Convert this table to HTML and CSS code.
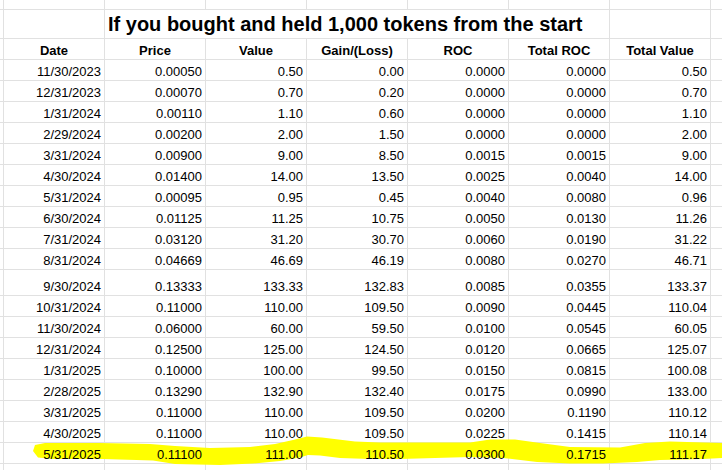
FILE: index.html
```html
<!DOCTYPE html>
<html lang="en">
<head>
<meta charset="utf-8">
<title>Token hold table</title>
<link rel="stylesheet" href="styles.css">
</head>
<body>
<main class="sheet">
  <div class="grid">
    <div class="row"><div class="c"></div><div class="c"></div><div class="c"></div><div class="c"></div><div class="c"></div><div class="c"></div><div class="c"></div><div class="c"></div><div class="c"></div></div>
    <div class="row title-row"><div class="c"></div><div class="c"></div><div class="c title"><span class="t">If you bought and held 1,000 tokens from the start</span></div><div class="c"></div><div class="c"></div></div>
    <div class="row head"><div class="c"></div><div class="c h"><span class="t">Date</span></div><div class="c h"><span class="t">Price</span></div><div class="c h"><span class="t">Value</span></div><div class="c h"><span class="t">Gain/(Loss)</span></div><div class="c h"><span class="t">ROC</span></div><div class="c h"><span class="t">Total ROC</span></div><div class="c h"><span class="t">Total Value</span></div><div class="c"></div></div>
    <div class="row"><div class="c"></div><div class="c n"><span class="t">11/30/2023</span></div><div class="c n"><span class="t">0.00050</span></div><div class="c n"><span class="t">0.50</span></div><div class="c n"><span class="t">0.00</span></div><div class="c n"><span class="t">0.0000</span></div><div class="c n"><span class="t">0.0000</span></div><div class="c n"><span class="t">0.50</span></div><div class="c"></div></div>
    <div class="row"><div class="c"></div><div class="c n"><span class="t">12/31/2023</span></div><div class="c n"><span class="t">0.00070</span></div><div class="c n"><span class="t">0.70</span></div><div class="c n"><span class="t">0.20</span></div><div class="c n"><span class="t">0.0000</span></div><div class="c n"><span class="t">0.0000</span></div><div class="c n"><span class="t">0.70</span></div><div class="c"></div></div>
    <div class="row"><div class="c"></div><div class="c n"><span class="t">1/31/2024</span></div><div class="c n"><span class="t">0.00110</span></div><div class="c n"><span class="t">1.10</span></div><div class="c n"><span class="t">0.60</span></div><div class="c n"><span class="t">0.0000</span></div><div class="c n"><span class="t">0.0000</span></div><div class="c n"><span class="t">1.10</span></div><div class="c"></div></div>
    <div class="row"><div class="c"></div><div class="c n"><span class="t">2/29/2024</span></div><div class="c n"><span class="t">0.00200</span></div><div class="c n"><span class="t">2.00</span></div><div class="c n"><span class="t">1.50</span></div><div class="c n"><span class="t">0.0000</span></div><div class="c n"><span class="t">0.0000</span></div><div class="c n"><span class="t">2.00</span></div><div class="c"></div></div>
    <div class="row"><div class="c"></div><div class="c n"><span class="t">3/31/2024</span></div><div class="c n"><span class="t">0.00900</span></div><div class="c n"><span class="t">9.00</span></div><div class="c n"><span class="t">8.50</span></div><div class="c n"><span class="t">0.0015</span></div><div class="c n"><span class="t">0.0015</span></div><div class="c n"><span class="t">9.00</span></div><div class="c"></div></div>
    <div class="row"><div class="c"></div><div class="c n"><span class="t">4/30/2024</span></div><div class="c n"><span class="t">0.01400</span></div><div class="c n"><span class="t">14.00</span></div><div class="c n"><span class="t">13.50</span></div><div class="c n"><span class="t">0.0025</span></div><div class="c n"><span class="t">0.0040</span></div><div class="c n"><span class="t">14.00</span></div><div class="c"></div></div>
    <div class="row"><div class="c"></div><div class="c n"><span class="t">5/31/2024</span></div><div class="c n"><span class="t">0.00095</span></div><div class="c n"><span class="t">0.95</span></div><div class="c n"><span class="t">0.45</span></div><div class="c n"><span class="t">0.0040</span></div><div class="c n"><span class="t">0.0080</span></div><div class="c n"><span class="t">0.96</span></div><div class="c"></div></div>
    <div class="row"><div class="c"></div><div class="c n"><span class="t">6/30/2024</span></div><div class="c n"><span class="t">0.01125</span></div><div class="c n"><span class="t">11.25</span></div><div class="c n"><span class="t">10.75</span></div><div class="c n"><span class="t">0.0050</span></div><div class="c n"><span class="t">0.0130</span></div><div class="c n"><span class="t">11.26</span></div><div class="c"></div></div>
    <div class="row"><div class="c"></div><div class="c n"><span class="t">7/31/2024</span></div><div class="c n"><span class="t">0.03120</span></div><div class="c n"><span class="t">31.20</span></div><div class="c n"><span class="t">30.70</span></div><div class="c n"><span class="t">0.0060</span></div><div class="c n"><span class="t">0.0190</span></div><div class="c n"><span class="t">31.22</span></div><div class="c"></div></div>
    <div class="row"><div class="c"></div><div class="c n"><span class="t">8/31/2024</span></div><div class="c n"><span class="t">0.04669</span></div><div class="c n"><span class="t">46.69</span></div><div class="c n"><span class="t">46.19</span></div><div class="c n"><span class="t">0.0080</span></div><div class="c n"><span class="t">0.0270</span></div><div class="c n"><span class="t">46.71</span></div><div class="c"></div></div>
    <div class="row"><div class="c"></div><div class="c n"><span class="t">9/30/2024</span></div><div class="c n"><span class="t">0.13333</span></div><div class="c n"><span class="t">133.33</span></div><div class="c n"><span class="t">132.83</span></div><div class="c n"><span class="t">0.0085</span></div><div class="c n"><span class="t">0.0355</span></div><div class="c n"><span class="t">133.37</span></div><div class="c"></div></div>
    <div class="row"><div class="c"></div><div class="c n"><span class="t">10/31/2024</span></div><div class="c n"><span class="t">0.11000</span></div><div class="c n"><span class="t">110.00</span></div><div class="c n"><span class="t">109.50</span></div><div class="c n"><span class="t">0.0090</span></div><div class="c n"><span class="t">0.0445</span></div><div class="c n"><span class="t">110.04</span></div><div class="c"></div></div>
    <div class="row"><div class="c"></div><div class="c n"><span class="t">11/30/2024</span></div><div class="c n"><span class="t">0.06000</span></div><div class="c n"><span class="t">60.00</span></div><div class="c n"><span class="t">59.50</span></div><div class="c n"><span class="t">0.0100</span></div><div class="c n"><span class="t">0.0545</span></div><div class="c n"><span class="t">60.05</span></div><div class="c"></div></div>
    <div class="row"><div class="c"></div><div class="c n"><span class="t">12/31/2024</span></div><div class="c n"><span class="t">0.12500</span></div><div class="c n"><span class="t">125.00</span></div><div class="c n"><span class="t">124.50</span></div><div class="c n"><span class="t">0.0120</span></div><div class="c n"><span class="t">0.0665</span></div><div class="c n"><span class="t">125.07</span></div><div class="c"></div></div>
    <div class="row"><div class="c"></div><div class="c n"><span class="t">1/31/2025</span></div><div class="c n"><span class="t">0.10000</span></div><div class="c n"><span class="t">100.00</span></div><div class="c n"><span class="t">99.50</span></div><div class="c n"><span class="t">0.0150</span></div><div class="c n"><span class="t">0.0815</span></div><div class="c n"><span class="t">100.08</span></div><div class="c"></div></div>
    <div class="row"><div class="c"></div><div class="c n"><span class="t">2/28/2025</span></div><div class="c n"><span class="t">0.13290</span></div><div class="c n"><span class="t">132.90</span></div><div class="c n"><span class="t">132.40</span></div><div class="c n"><span class="t">0.0175</span></div><div class="c n"><span class="t">0.0990</span></div><div class="c n"><span class="t">133.00</span></div><div class="c"></div></div>
    <div class="row"><div class="c"></div><div class="c n"><span class="t">3/31/2025</span></div><div class="c n"><span class="t">0.11000</span></div><div class="c n"><span class="t">110.00</span></div><div class="c n"><span class="t">109.50</span></div><div class="c n"><span class="t">0.0200</span></div><div class="c n"><span class="t">0.1190</span></div><div class="c n"><span class="t">110.12</span></div><div class="c"></div></div>
    <div class="row"><div class="c"></div><div class="c n"><span class="t">4/30/2025</span></div><div class="c n"><span class="t">0.11000</span></div><div class="c n"><span class="t">110.00</span></div><div class="c n"><span class="t">109.50</span></div><div class="c n"><span class="t">0.0225</span></div><div class="c n"><span class="t">0.1415</span></div><div class="c n"><span class="t">110.14</span></div><div class="c"></div></div>
    <div class="row"><div class="c"></div><div class="c n"><span class="t">5/31/2025</span></div><div class="c n"><span class="t">0.11100</span></div><div class="c n"><span class="t">111.00</span></div><div class="c n"><span class="t">110.50</span></div><div class="c n"><span class="t">0.0300</span></div><div class="c n"><span class="t">0.1715</span></div><div class="c n"><span class="t">111.17</span></div><div class="c"></div></div>
    <div class="row"><div class="c"></div><div class="c"></div><div class="c"></div><div class="c"></div><div class="c"></div><div class="c"></div><div class="c"></div><div class="c"></div><div class="c"></div></div>
  </div>
  <svg class="marker" width="722" height="470" viewBox="0 0 722 470" aria-hidden="true">
    <path d="M35 445 L45 443 L100 443 L150 444 L175 446 L210 448 L250 447 L275 444 L293 440 L307 436.5 L322 437.5 L355 441.5 L380 442.5 L470 442.5 L490 439.5 L515 439.5 L540 443 L570 447 L620 447.5 L645 443 L670 441.5 L722 443 L722 458 L703 459 L660 460 L637 462 L603 463.5 L570 463.5 L537 462 L503 458 L470 457 L400 459 L370 459 L340 458 L320 455.5 L308 455 L300 457.5 L280 461 L253 463.5 L220 465 L175 464 L153 460.5 L103 459 L53 459 L38 457.5 L33 451 Z" fill="#ffff00"/>
  </svg>
</main>
</body>
</html>
```

FILE: styles.css
```css
html, body {
  margin: 0;
  padding: 0;
  background: #ffffff;
}

body {
  width: 722px;
  height: 470px;
  overflow: hidden;
  font-family: "Liberation Sans", Arial, sans-serif;
  font-size: 13px;
  color: #000000;
}

.sheet {
  position: relative;
  width: 722px;
  height: 470px;
  overflow: hidden;
}

.grid {
  display: grid;
  grid-template-columns: 3px repeat(7, 100px) 100px;
  grid-template-rows: 9px 28px 20px repeat(10, 20px) 25px repeat(8, 20px) 20px;
  gap: 1px;
  background: #e1e1e1;
  width: max-content;
}

.row {
  display: contents;
}

.c {
  background: #ffffff;
  display: flex;
  align-items: flex-end;
  min-width: 0;
  overflow: visible;
  white-space: nowrap;
}

.t {
  position: relative;
  z-index: 2;
  line-height: 15px;
}

.n {
  justify-content: flex-end;
  padding: 0 3px 1px 3px;
}

.h {
  justify-content: center;
  font-weight: bold;
  padding: 0 3px 1px 3px;
}

.title {
  grid-column: span 5;
  font-weight: bold;
  font-size: 20px;
  padding: 0 3px 2px 3px;
}

.title .t {
  line-height: 23px;
}

.marker {
  position: absolute;
  left: 0;
  top: 0;
  z-index: 1;
  pointer-events: none;
}
```
